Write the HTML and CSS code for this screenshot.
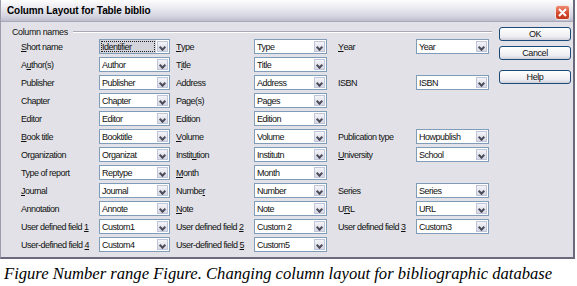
FILE: index.html
```html
<!DOCTYPE html>
<html lang="en">
<head>
  <meta charset="UTF-8">
  <title>Column Layout for Table biblio</title>
  <link rel="stylesheet" href="styles.css">
</head>
<body>

<div class="dialog">
  <div class="titlebar">
    <span class="title">Column Layout for Table biblio</span>
    <span class="close">
      <svg width="9" height="9" viewBox="0 0 9 9"><path d="M1 1L8 8M8 1L1 8" stroke="#fff" stroke-width="2"/></svg>
    </span>
  </div>

  <div class="body">
    <div class="fields">
      <div class="legend"><span>Column names</span><div class="rule"></div></div>

      <div class="grid">
        <span class="label"><u>S</u>hort name</span>
        <span class="combo focus"><span class="value">Identifier</span><i></i></span>
        <span class="label"><u>T</u>ype</span>
        <span class="combo"><span class="value">Type</span><i></i></span>
        <span class="label far"><u>Y</u>ear</span>
        <span class="combo"><span class="value">Year</span><i></i></span>

        <span class="label">A<u>u</u>thor(s)</span>
        <span class="combo"><span class="value">Author</span><i></i></span>
        <span class="label">T<u>i</u>tle</span>
        <span class="combo"><span class="value">Title</span><i></i></span>
        <span></span><span></span>

        <span class="label">Publisher</span>
        <span class="combo"><span class="value">Publisher</span><i></i></span>
        <span class="label">Address</span>
        <span class="combo"><span class="value">Address</span><i></i></span>
        <span class="label far">ISBN</span>
        <span class="combo"><span class="value">ISBN</span><i></i></span>

        <span class="label">Chapter</span>
        <span class="combo"><span class="value">Chapter</span><i></i></span>
        <span class="label">Page(s)</span>
        <span class="combo"><span class="value">Pages</span><i></i></span>
        <span></span><span></span>

        <span class="label">Editor</span>
        <span class="combo"><span class="value">Editor</span><i></i></span>
        <span class="label">Edition</span>
        <span class="combo"><span class="value">Edition</span><i></i></span>
        <span></span><span></span>

        <span class="label"><u>B</u>ook title</span>
        <span class="combo"><span class="value">Booktitle</span><i></i></span>
        <span class="label"><u>V</u>olume</span>
        <span class="combo"><span class="value">Volume</span><i></i></span>
        <span class="label far">Publication type</span>
        <span class="combo"><span class="value">Howpublish</span><i></i></span>

        <span class="label">Organization</span>
        <span class="combo"><span class="value">Organizat</span><i></i></span>
        <span class="label">Instit<u>u</u>tion</span>
        <span class="combo"><span class="value">Institutn</span><i></i></span>
        <span class="label far"><u>U</u>niversity</span>
        <span class="combo"><span class="value">School</span><i></i></span>

        <span class="label">Type of report</span>
        <span class="combo"><span class="value">Reptype</span><i></i></span>
        <span class="label"><u>M</u>onth</span>
        <span class="combo"><span class="value">Month</span><i></i></span>
        <span></span><span></span>

        <span class="label"><u>J</u>ournal</span>
        <span class="combo"><span class="value">Journal</span><i></i></span>
        <span class="label">Numbe<u>r</u></span>
        <span class="combo"><span class="value">Number</span><i></i></span>
        <span class="label far">Series</span>
        <span class="combo"><span class="value">Series</span><i></i></span>

        <span class="label">Annotation</span>
        <span class="combo"><span class="value">Annote</span><i></i></span>
        <span class="label"><u>N</u>ote</span>
        <span class="combo"><span class="value">Note</span><i></i></span>
        <span class="label far">U<u>R</u>L</span>
        <span class="combo"><span class="value">URL</span><i></i></span>

        <span class="label">User defined field&nbsp;<u>1</u></span>
        <span class="combo"><span class="value">Custom1</span><i></i></span>
        <span class="label">User defined field&nbsp;<u>2</u></span>
        <span class="combo"><span class="value">Custom 2</span><i></i></span>
        <span class="label far">User defined field&nbsp;<u>3</u></span>
        <span class="combo"><span class="value">Custom3</span><i></i></span>

        <span class="label">User-defined field&nbsp;<u>4</u></span>
        <span class="combo"><span class="value">Custom4</span><i></i></span>
        <span class="label">User-defined field&nbsp;<u>5</u></span>
        <span class="combo"><span class="value">Custom5</span><i></i></span>
        <span></span><span></span>
      </div>
    </div>

    <div class="buttons">
      <button class="btn">OK</button>
      <button class="btn">Cancel</button>
      <button class="btn help">Help</button>
    </div>
  </div>
</div>

<p class="caption">Figure Number range Figure. Changing column layout for bibliographic database</p>

</body>
</html>
```

FILE: styles.css
```css
body {
  margin: 0;
  background-color: #fff;
  font-family: 'Liberation Sans', Arial, sans-serif;
}
.dialog {
  width: 575px;
  height: 259px;
  box-sizing: border-box;
  background-color: #e2e1e7;
  border-left: 1px solid #9c9cac;
  border-right: 2px solid #6a6a7c;
  border-bottom: 2px solid #6a6a7c;
}
.titlebar {
  height: 22px;
  display: flex;
  align-items: center;
  justify-content: space-between;
  padding: 0 3px 0 6px;
  background: linear-gradient(#fdfdfe, #ececf2 35%, #d6d6e2 75%, #bdbdcf);
  border-bottom: 1px solid #a8a8b8;
  box-sizing: border-box;
}
.title {
  font-size: 10px;
  font-weight: bold;
  color: #000;
  letter-spacing: -0.1px;
}
.close {
  width: 15px;
  height: 15px;
  margin-top: 3px;
  display: flex;
  align-items: center;
  justify-content: center;
  border: 1px solid #f4e8e4;
  border-radius: 3px;
  background: linear-gradient(#ec8a70, #d2462a 60%, #c0381c);
  box-sizing: border-box;
}
.body {
  display: flex;
  padding-top: 5px;
}
.fields {
  width: 480px;
  padding-left: 11px;
}
.legend {
  display: flex;
  align-items: center;
  height: 10px;
  font-size: 9px;
  letter-spacing: -0.4px;
  color: #111;
}
.rule {
  flex: 1;
  height: 0;
  margin-left: 5px;
  border-top: 1px solid #a9a9b6;
  border-bottom: 1px solid #fff;
}
.grid {
  display: grid;
  grid-template-columns: 72px 71px 72px 73px 77px 73px;
  grid-auto-rows: 15px;
  column-gap: 6px;
  row-gap: 3px;
  margin-top: 2px;
  padding-left: 9px;
  font-size: 9px;
  letter-spacing: -0.5px;
  color: #111;
}
.label {
  display: flex;
  align-items: center;
  white-space: nowrap;
}
.label.far {
  padding-left: 5px;
}
.combo {
  display: flex;
  border: 1px solid #7f9db9;
  background-color: #fff;
  box-sizing: border-box;
}
.value {
  flex: 1;
  display: flex;
  align-items: center;
  padding-left: 2px;
  white-space: nowrap;
  overflow: hidden;
}
.combo.focus .value {
  background-color: #d4d4dc;
  outline: 1px dotted #222;
  outline-offset: -2px;
}
.combo i {
  width: 11px;
  margin: 1px;
  border: 1px solid #c0c6da;
  background: linear-gradient(#f4f4f8, #d6d8e4);
  box-sizing: border-box;
  position: relative;
}
.combo i::after {
  content: '';
  position: absolute;
  left: 2px;
  top: 3px;
  width: 3px;
  height: 3px;
  border-right: 2px solid #4d4d5a;
  border-bottom: 2px solid #4d4d5a;
  transform: rotate(45deg);
}
.buttons {
  display: flex;
  flex-direction: column;
  gap: 5px;
  margin-left: 7px;
}
.btn {
  width: 72px;
  height: 14px;
  padding: 0;
  font-family: inherit;
  font-size: 9px;
  letter-spacing: -0.4px;
  color: #111;
  border: 1px solid #1c4a78;
  border-radius: 3px;
  background: linear-gradient(#ffffff, #eeeef2 70%, #d0d0dc);
}
.btn.help {
  margin-top: 5px;
}
.caption {
  margin: 5px 0 0 4px;
  font-family: 'Liberation Serif', 'Times New Roman', serif;
  font-style: italic;
  font-size: 16.6px;
  color: #000;
}
```
